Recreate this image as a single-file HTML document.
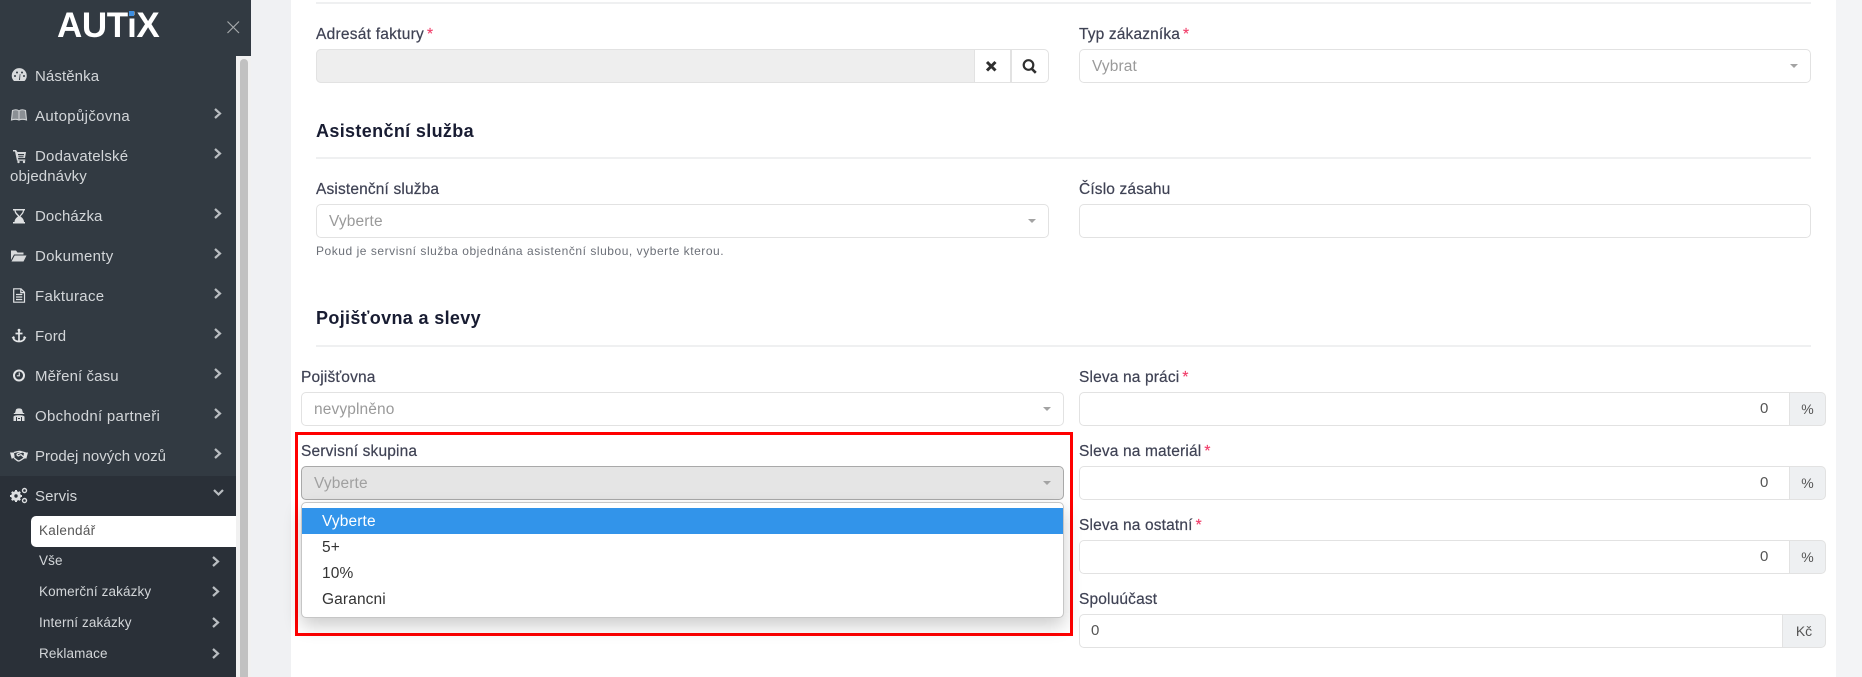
<!DOCTYPE html>
<html lang="cs"><head><meta charset="utf-8"><title>AUTiX</title>
<style>
html,body{margin:0;padding:0}
body{width:1862px;height:677px;overflow:hidden;position:relative;background:#f3f4f6;font-family:"Liberation Sans",sans-serif;color:#3f4254}
div,span.a{position:absolute;box-sizing:border-box}
.band{left:251px;top:0;width:40px;height:677px;background:#f0f1f3}
.side{left:0;top:0;width:236px;height:677px;background:#323a42}
.logoT{left:0;top:0;width:251px;height:56px;background:#323a42}
.track{left:236px;top:56px;width:15px;height:621px;background:#f1f1f1}
.thumb{left:240px;top:59px;width:8px;height:618px;background:#c1c1c1;border-radius:4px 4px 0 0}
.act{left:0;top:476px;width:236px;height:201px;background:#2a3038}
.pill{left:31px;top:516px;width:205px;height:31px;background:#fff;border-radius:5px 0 0 5px}
.logo{left:57px;top:6px;height:40px;line-height:40px;font-size:35px;font-weight:bold;color:#fff;letter-spacing:-.4px;white-space:nowrap}
.m{height:20px;line-height:20px;font-size:15px;letter-spacing:.1px;color:#d3d6d9;white-space:nowrap;transform:translateY(1px)}
.s{height:20px;line-height:20px;font-size:13.500px;letter-spacing:.12px;color:#d3d6d9;white-space:nowrap}
.card{left:291px;top:0;width:1545px;height:677px;background:#fff}
.hr{height:2px;background:#eff0f1;left:316px;width:1495px}
.l{height:20px;line-height:20px;font-size:15.500px;letter-spacing:.15px;color:#3f4254;white-space:nowrap;-webkit-text-stroke:.2px #3f4254;transform:translateY(1px)}
.l i{font-style:normal;color:#f1416c;margin-left:3px;-webkit-text-stroke:.2px #f1416c}
.h{height:26px;line-height:26px;font-size:18px;font-weight:bold;letter-spacing:.35px;color:#181c32;white-space:nowrap}
.help{left:316px;top:241px;height:20px;line-height:20px;font-size:12px;letter-spacing:.54px;color:#6c7078;white-space:nowrap}
.f{border:1.500px solid #e2e2e2;border-radius:5px;background:#fff}
.ph{height:20px;line-height:20px;font-size:15.500px;letter-spacing:.12px;color:#9a9a9a;white-space:nowrap;transform:translateY(1px)}
.car{width:0;height:0;border-left:4px solid transparent;border-right:4px solid transparent;border-top:4px solid #a3a3a3}
.add{background:#eef0f2;border:1.500px solid #e2e2e2;border-left:0;border-radius:0 5px 5px 0;text-align:center;font-size:14px;line-height:32px;color:#555}
.v{height:20px;line-height:20px;font-size:15px;color:#555;letter-spacing:.3px;transform:translateY(1px)}
.red{left:295px;top:432px;width:778px;height:204px;border:3px solid #f00}
.dd{left:301px;top:502px;width:763px;height:116px;background:#fff;border:1px solid #c6c6c6;border-radius:5px;box-shadow:0 8px 18px rgba(0,0,0,.2)}
.blue{left:302px;top:508px;width:761px;height:26px;background:#3294ea}
.o{left:322px;height:26px;line-height:26px;font-size:15.500px;letter-spacing:.12px;color:#333;white-space:nowrap;transform:translateY(1px)}
</style></head><body>
<div class="band"></div>
<div class="card"></div>
<div class="side"></div><div class="logoT"></div>
<div class="act"></div><div class="pill"></div>
<div class="track"></div><div class="thumb"></div>

<div class="logo">AUTiX</div>
<div style="left:129px;top:11px;width:5px;height:5px;background:#3f8fe0"></div>

<div class="m" style="left:35px;top:66px">Nástěnka</div>
<div class="m" style="left:35px;top:106px;letter-spacing:.35px">Autopůjčovna</div>
<div class="m" style="left:35px;top:146px;letter-spacing:.2px">Dodavatelské</div>
<div class="m" style="left:10px;top:166px">objednávky</div>
<div class="m" style="left:35px;top:206px">Docházka</div>
<div class="m" style="left:35px;top:246px;letter-spacing:.3px">Dokumenty</div>
<div class="m" style="left:35px;top:286px;letter-spacing:.3px">Fakturace</div>
<div class="m" style="left:35px;top:326px">Ford</div>
<div class="m" style="left:35px;top:366px">Měření času</div>
<div class="m" style="left:35px;top:406px;letter-spacing:.3px">Obchodní partneři</div>
<div class="m" style="left:35px;top:446px;letter-spacing:0">Prodej nových vozů</div>
<div class="m" style="left:35px;top:486px">Servis</div>
<div class="s" style="left:39px;top:521px;color:#555;letter-spacing:.3px">Kalendář</div>
<div class="s" style="left:39px;top:551px">Vše</div>
<div class="s" style="left:39px;top:582px">Komerční zakázky</div>
<div class="s" style="left:39px;top:613px">Interní zakázky</div>
<div class="s" style="left:39px;top:644px">Reklamace</div>

<svg width="251" height="677" style="position:absolute;left:0;top:0" fill="none">
<g stroke="#a5a8ab" stroke-width="1.200"><path d="M227.500 21.500L239 33M239 21.500L227.500 33"/></g>
<g stroke="#b9bdc1" stroke-width="2.200" fill="none">
<path d="M215 109l5 4.500-5 4.500M215 149l5 4.500-5 4.500M215 209l5 4.500-5 4.500M215 249l5 4.500-5 4.500M215 289l5 4.500-5 4.500M215 329l5 4.500-5 4.500M215 369l5 4.500-5 4.500M215 409l5 4.500-5 4.500M215 449l5 4.500-5 4.500"/>
<path d="M214 490l4.500 4.500 4.500-4.500"/>
<path d="M213 557l5 4.500-5 4.500M213 587l5 4.500-5 4.500M213 618l5 4.500-5 4.500M213 649l5 4.500-5 4.500"/>
</g>
<g fill="#d8dadc">
<path d="M14 81a7.500 7.500 0 1 1 10.500 0z"/>
</g>
<g fill="#323a42"><circle cx="15" cy="76" r="1"/><circle cx="17" cy="72.500" r="1"/><circle cx="22" cy="72.500" r="1"/><circle cx="24" cy="76" r="1"/><path d="M19 80l.8-6 .6.1-.4 5.900z"/></g>
<g stroke="#d0d3d5" stroke-width="1.100">
<path d="M12.500 110.500c2.500-1 5-1 6.500.5 1.500-1.500 4-1.500 6.500-.5l1 9.500c-2.500-.8-5.500-.8-7.500 0-2-.8-5-.8-7.500 0z" fill="#8b9095"/>
<path d="M19 111v9"/>
</g>
<g fill="#d8dadc" transform="translate(0,-1)">
<path d="M13 151h3l1.500 2h8.500l-1 6h-7l.3 1.500h7v1.200h-8.300L15 152.500h-2z"/>
<circle cx="18.500" cy="163" r="1.200"/><circle cx="24" cy="163" r="1.200"/>
</g>
<path d="M18 154h6v1.300h-6zM18.500 156.300h5v1h-5z" fill="#323a42"/>
<g fill="#dfe1e3">
<path d="M13 209h12v1.500h-12zM13 222h12v1.500h-12z"/>
<path d="M14.500 222c0-3 2.500-4.500 3.500-5.700-1-1.200-3.500-2.700-3.500-5.800h1.200c0 2.500 3 3.700 3.800 5.800.8-2.100 3.300-3.300 3.300-5.800h1.200c0 3.100-2.500 4.600-3.500 5.800 1 1.200 3.500 2.700 3.500 5.700z"/>
</g>
<g fill="#d8dadc" transform="translate(0,-1)">
<path d="M11 251.500h5l1.500 2h6v2h-9.500L11 261z"/>
<path d="M14.700 256.500H26.500l-3 6H11.500z"/>
</g>
<g stroke="#e0e2e4" stroke-width="1.200" transform="translate(0,-1)">
<path d="M13.700 289.800h7.300l3.500 3.500v9.900h-10.800z"/><path d="M20.800 290v3.600h3.600"/><path d="M16 295.500h6.300M16 298h6.300M16 300.500h6.300"/>
</g>
<g fill="none" stroke="#e4e6e8" stroke-width="1.700" transform="translate(0,-1)">
<circle cx="19" cy="331.200" r="1.400" fill="#e4e6e8" stroke="none"/>
<path d="M19 332v10M15.500 334.500h7M13 338c.3 3 3 4.500 6 4.500s5.700-1.500 6-4.500"/>
</g>
<path d="M11.500 337.500l2.500-1.500 1.200 2.500zM26.500 337.500l-2.500-1.500-1.200 2.500z" fill="#e4e6e8"/>
<circle cx="19" cy="375.500" r="5" stroke="#e2e4e6" stroke-width="2"/>
<path d="M19.300 372.500v3.300h-2.500" stroke="#e2e4e6" stroke-width="1.200"/>
<g fill="#dcdee0" transform="translate(0,-1)">
<path d="M16 410.500c1-1.500 5-1.500 6 0l1 3.500h-8z"/><path d="M13.800 414h10.400v1H13.800z"/>
<path d="M13.500 422v-4c0-1.200 1.500-1.800 5.500-1.800s5.500.6 5.500 1.800v4z"/>
</g>
<path d="M16.500 417v4M21.500 417v4M18 418.500h2" stroke="#323a42" stroke-width="1"/>
<g stroke="#e0e2e4" stroke-width="1.300" fill="none">
<path d="M14 452.500c3-.5 5-1.700 7.500-.8 1.500.5 2.500 1 4 1"/>
<path d="M22 452l-4.500 1.800c-1 .8 0 2.500 1.500 1.800l2-1 4 3.700"/>
<path d="M14 458l3 2.300c1 .8 2.500.8 3.500 0l3.500-2.300"/>
</g>
<path d="M10 452.500h4l.7 5-3 1.200zM28 452.500h-4l-.7 5 3 1.200z" fill="#e0e2e4"/>
<g transform="translate(0,-1)">
<circle cx="16" cy="497" r="3.500" stroke="#dcdee0" stroke-width="2.800"/>
<path d="M16 491v12M10 497h12M11.800 492.800l8.400 8.400M20.200 492.800l-8.400 8.400" stroke="#dcdee0" stroke-width="2"/>
<circle cx="16" cy="497" r="1.700" fill="#2a3038"/>
<circle cx="24.500" cy="491.500" r="2" stroke="#dcdee0" stroke-width="1.400"/>
<circle cx="24.500" cy="501.500" r="2" stroke="#dcdee0" stroke-width="1.400"/>
</g>
</svg>

<div class="hr" style="top:2px"></div>

<div class="l" style="left:316px;top:24px;letter-spacing:.25px">Adresát faktury<i>*</i></div>
<div style="left:316px;top:49px;width:733px;height:34px;border:1.500px solid #e2e2e2;border-radius:5px;background:#fff"></div>
<div style="left:316px;top:49px;width:659px;height:34px;background:#eeeeee;border:1.500px solid #e2e2e2;border-radius:5px 0 0 5px"></div>
<div style="left:1010px;top:49px;width:1.500px;height:34px;background:#e2e2e2"></div>
<svg width="733" height="34" style="position:absolute;left:316px;top:49px" fill="none">
<path d="M671 13l8.500 8.500M679.500 13l-8.500 8.500" stroke="#2f2f2f" stroke-width="3"/>
<circle cx="712.500" cy="16" r="4.800" stroke="#2f2f2f" stroke-width="2.200"/><path d="M716 20l3.800 3.800" stroke="#2f2f2f" stroke-width="2.600"/>
</svg>

<div class="l" style="left:1079px;top:24px">Typ zákazníka<i>*</i></div>
<div class="f" style="left:1079px;top:49px;width:732px;height:34px"></div>
<div class="ph" style="left:1092px;top:56px">Vybrat</div>
<div class="car" style="left:1790px;top:64px"></div>

<div class="h" style="left:316px;top:118px">Asistenční služba</div>
<div class="hr" style="top:157px"></div>

<div class="l" style="left:316px;top:179px">Asistenční služba</div>
<div class="f" style="left:316px;top:204px;width:733px;height:34px"></div>
<div class="ph" style="left:329px;top:211px">Vyberte</div>
<div class="car" style="left:1028px;top:219px"></div>
<div class="help">Pokud je servisní služba objednána asistenční slubou, vyberte kterou.</div>

<div class="l" style="left:1079px;top:179px">Číslo zásahu</div>
<div class="f" style="left:1079px;top:204px;width:732px;height:34px"></div>

<div class="h" style="left:316px;top:305px">Pojišťovna a slevy</div>
<div class="hr" style="top:345px"></div>

<div class="l" style="left:301px;top:367px">Pojišťovna</div>
<div class="f" style="left:301px;top:392px;width:763px;height:34px"></div>
<div class="ph" style="left:314px;top:399px">nevyplněno</div>
<div class="car" style="left:1043px;top:407px"></div>

<div class="red"></div>
<div class="l" style="left:301px;top:441px">Servisní skupina</div>
<div style="left:301px;top:466px;width:763px;height:34px;background:#e5e5e5;border:1.500px solid #a9a9a9;border-radius:5px"></div>
<div class="ph" style="left:314px;top:473px;color:#a0a0a0">Vyberte</div>
<div class="car" style="left:1043px;top:481px"></div>
<div class="dd"></div>
<div class="blue"></div>
<div class="o" style="top:508px;color:#fff">Vyberte</div>
<div class="o" style="top:534px">5+</div>
<div class="o" style="top:560px">10%</div>
<div class="o" style="top:586px">Garancni</div>

<div class="l" style="left:1079px;top:367px">Sleva na práci<i>*</i></div>
<div class="f" style="left:1079px;top:392px;width:711px;height:34px;border-radius:5px 0 0 5px"></div>
<div class="add" style="left:1790px;top:392px;width:36px;height:34px">%</div>
<div class="v" style="left:1760px;top:398px">0</div>

<div class="l" style="left:1079px;top:441px">Sleva na materiál<i>*</i></div>
<div class="f" style="left:1079px;top:466px;width:711px;height:34px;border-radius:5px 0 0 5px"></div>
<div class="add" style="left:1790px;top:466px;width:36px;height:34px">%</div>
<div class="v" style="left:1760px;top:472px">0</div>

<div class="l" style="left:1079px;top:515px">Sleva na ostatní<i>*</i></div>
<div class="f" style="left:1079px;top:540px;width:711px;height:34px;border-radius:5px 0 0 5px"></div>
<div class="add" style="left:1790px;top:540px;width:36px;height:34px">%</div>
<div class="v" style="left:1760px;top:546px">0</div>

<div class="l" style="left:1079px;top:589px">Spoluúčast</div>
<div class="f" style="left:1079px;top:614px;width:704px;height:34px;border-radius:5px 0 0 5px"></div>
<div class="add" style="left:1783px;top:614px;width:43px;height:34px">Kč</div>
<div class="v" style="left:1091px;top:620px">0</div>
</body></html>
